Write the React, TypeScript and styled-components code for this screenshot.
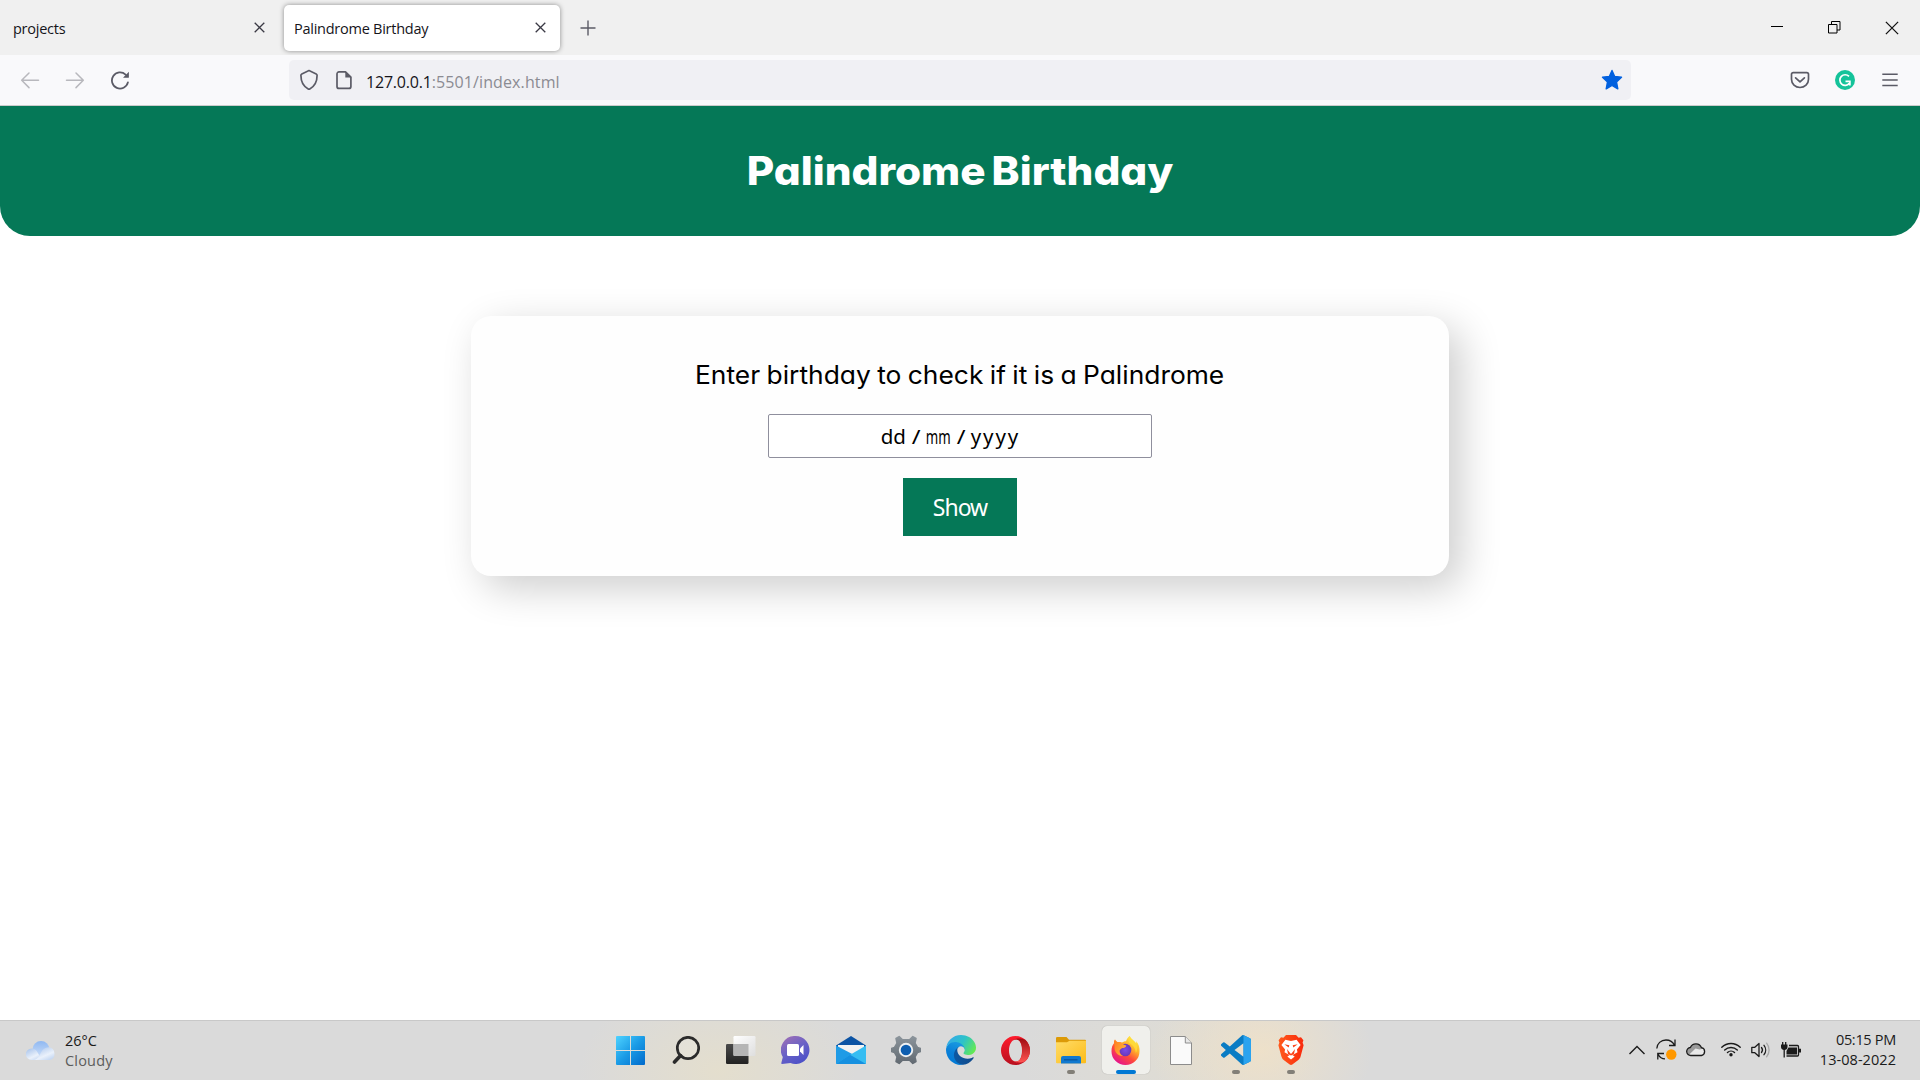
import React from 'react';
import styled, { createGlobalStyle, css } from 'styled-components';

const GREEN = '#057857';

const GlobalStyle = createGlobalStyle`
  * { box-sizing: border-box; }
  body { margin: 0; background: #fff; overflow: hidden; }
  svg { display: block; flex: none; }
`;

const Screen = styled.div`
  width: 1920px;
  height: 1080px;
  display: flex;
  flex-direction: column;
  background: #fff;
  font-family: 'Open Sans', 'Noto Sans', sans-serif;
  color: #15141a;
`;

/* ---------- browser chrome ---------- */

const TabStrip = styled.div`
  height: 55px;
  flex: none;
  display: flex;
  align-items: center;
  background: #f0f0f0;
`;

const Tab = styled.div<{ $active?: boolean }>`
  width: 276px;
  height: 46px;
  padding: 0 14px 0 10px;
  display: flex;
  align-items: center;
  justify-content: space-between;
  border-radius: 5px;
  ${(p) =>
    p.$active
      ? css`
          background: #fff;
          box-shadow: 0 0 5px rgba(0, 0, 0, 0.42);
        `
      : css`
          width: 281px;
          padding: 0 16px 0 13px;
          margin-right: 3px;
        `}
`;

const TabTitle = styled.span`
  font-size: 14.5px;
  line-height: 20px;
  letter-spacing: -0.25px;
  white-space: nowrap;
  padding-top: 3px;
`;

const NewTab = styled.div`
  margin-left: 20px;
  display: flex;
`;

const WindowControls = styled.div`
  margin-left: auto;
  padding-right: 21px;
  display: flex;
  align-items: center;
  gap: 44px;
`;

const Toolbar = styled.div`
  height: 51px;
  flex: none;
  display: flex;
  align-items: center;
  background: #f9f9fb;
  border-bottom: 1px solid #ccc;
`;

const NavButtons = styled.div`
  width: 289px;
  padding-left: 20px;
  display: flex;
  align-items: center;
  gap: 25px;
`;

const UrlBar = styled.div`
  width: 1342px;
  height: 40px;
  padding: 0 8px 0 10px;
  display: flex;
  align-items: center;
  border-radius: 5px;
  background: #f0f0f4;
`;

const UrlIcons = styled.div`
  display: flex;
  align-items: center;
  gap: 16px;
  margin-right: 13px;
`;

const Url = styled.span`
  flex: 1;
  font-size: 16px;
  line-height: 22px;
  padding-top: 3px;
  color: #8b8b92;
  letter-spacing: 0.11px;
`;

const Host = styled.span`
  color: #15141a;
  letter-spacing: -0.2px;
`;

const Extensions = styled.div`
  margin-left: auto;
  padding-right: 20px;
  display: flex;
  align-items: center;
  gap: 25px;
`;

/* ---------- page ---------- */

const Page = styled.main`
  flex: 1;
  display: flex;
  flex-direction: column;
  align-items: center;
  background: #fff;
  font-family: Inter, 'Open Sans', sans-serif;
  font-feature-settings: 'cv11';
`;

const Banner = styled.header`
  width: 100%;
  height: 130px;
  display: flex;
  align-items: center;
  justify-content: center;
  border-radius: 0 0 30px 30px;
  background: ${GREEN};
`;

const Title = styled.h1`
  margin: 0;
  font-size: 39px;
  line-height: 60px;
  font-weight: 800;
  word-spacing: -3px;
  color: #fff;
  white-space: nowrap;
  transform: scaleX(1.083);
`;

const Card = styled.section`
  width: 978px;
  height: 260px;
  margin-top: 80px;
  padding-top: 40px;
  display: flex;
  flex-direction: column;
  align-items: center;
  border-radius: 20px;
  background: #fefefe;
  box-shadow: 12px 12px 40px rgba(0, 0, 0, 0.2);
`;

const Prompt = styled.label`
  font-size: 25px;
  line-height: 38px;
  word-spacing: -1px;
  color: #000;
  white-space: nowrap;
  transform: scaleX(1.056);
`;

const DateField = styled.div`
  width: 384px;
  height: 44px;
  margin-top: 20px;
  padding-right: 19px;
  display: flex;
  align-items: center;
  justify-content: center;
  gap: 4px;
  border: 1px solid #8f8f9d;
  border-radius: 2px;
  background: #fff;
  font-family: 'Noto Sans', 'Open Sans', sans-serif;
  font-size: 20.5px;
  color: #000;
`;

const Segment = styled.span<{ $width: number; $stretch?: number; $spacing?: number }>`
  width: ${(p) => p.$width}px;
  display: flex;
  justify-content: center;
  transform: scaleX(${(p) => p.$stretch ?? 1});
  letter-spacing: ${(p) => p.$spacing ?? 0}px;
`;

const ShowButton = styled.button`
  width: 114px;
  height: 58px;
  margin-top: 20px;
  padding: 0;
  border: 0;
  background: ${GREEN};
  color: #fff;
  font-family: 'Noto Sans', 'Open Sans', sans-serif;
  font-size: 23px;
  letter-spacing: -1px;
`;

/* ---------- taskbar ---------- */

const Taskbar = styled.footer`
  height: 60px;
  flex: none;
  display: grid;
  grid-template-columns: 603px 715px 1fr;
  border-top: 1px solid #c8c8c8;
  background:
    radial-gradient(ellipse 140px 90px at 718px 50px, rgba(232, 224, 200, 0.7), rgba(232, 224, 200, 0)),
    radial-gradient(ellipse 110px 90px at 1262px 30px, rgba(242, 226, 198, 0.8), rgba(242, 226, 198, 0)),
    radial-gradient(ellipse 150px 90px at 1170px 40px, rgba(226, 222, 208, 0.6), rgba(226, 222, 208, 0)),
    #dadada;
`;

const Weather = styled.div`
  display: flex;
  align-items: center;
  gap: 9px;
  padding-left: 26px;
`;

const TwoLines = styled.div<{ $right?: boolean }>`
  display: flex;
  flex-direction: column;
  align-items: ${(p) => (p.$right ? 'flex-end' : 'flex-start')};
  font-size: 14.5px;
  line-height: 20px;
`;

const Line = styled.span<{ $muted?: boolean; $spacing?: number }>`
  color: ${(p) => (p.$muted ? '#5c5c5c' : '#1b1b1b')};
  letter-spacing: ${(p) => p.$spacing ?? 0}px;
  white-space: nowrap;
`;

const Apps = styled.div`
  display: flex;
`;

const AppCell = styled.div`
  width: 55px;
  height: 58px;
  display: flex;
  align-items: center;
  justify-content: center;
`;

const AppTile = styled.div<{ $active?: boolean }>`
  position: relative;
  width: 48px;
  height: 48px;
  display: flex;
  align-items: center;
  justify-content: center;
  border-radius: 5px;
  ${(p) => p.$active && 'background: #f0f0ec; box-shadow: 0 0 1px rgba(0,0,0,.3);'}
`;

const Indicator = styled.i<{ $active?: boolean }>`
  position: absolute;
  bottom: 0;
  left: 50%;
  transform: translateX(-50%);
  width: ${(p) => (p.$active ? 20 : 8)}px;
  height: 4px;
  border-radius: 2px;
  background: ${(p) => (p.$active ? '#0078d4' : '#827f78')};
`;

const Tray = styled.div`
  display: flex;
  align-items: center;
  justify-content: flex-end;
  padding: 0 24px 2px 0;
`;

const TrayIcons = styled.div`
  display: flex;
  align-items: center;
  margin-right: 19px;
`;

const TrayIcon = styled.span<{ $after: number }>`
  margin-right: ${(p) => p.$after}px;
`;

/* ---------- icons ---------- */

const CloseX = ({ size = 11, color = '#3a3944', w = 1.3 }) => (
  <svg width={size} height={size} viewBox="0 0 11 11" stroke={color} strokeWidth={w}>
    <path d="M.7.7l9.6 9.6M10.3.7L.7 10.3" />
  </svg>
);

const Arrow = ({ flip = false }) => (
  <svg width="20" height="20" viewBox="0 0 20 20" fill="none" stroke="#b8b8bd" strokeWidth="1.5" strokeLinecap="round" strokeLinejoin="round" transform={flip ? 'scale(-1 1)' : undefined}>
    <path d="M18.5 10.3H2M9 3L1.7 10.3 9 17.6" />
  </svg>
);

const Reload = () => (
  <svg width="20" height="20" viewBox="0 0 20 20" fill="none" stroke="#5b5b66" strokeWidth="1.8" strokeLinecap="round">
    <path d="M17.900 12.400A8.100 8.100 0 1 1 15.600 4.600" />
    <path d="M18.900 1.700v5.600a.5.5 0 0 1-.5.5h-5.400z" fill="#5b5b66" stroke="none" />
  </svg>
);

const Shield = () => (
  <svg width="20" height="22" viewBox="0 0 20 22" fill="none" stroke="#5b5b66" strokeWidth="1.7" strokeLinejoin="round">
    <path d="M10 1.600l7.200 3.300c.6.3.9.8.9 1.400 0 5.700-1.800 10.700-7.300 13.700a1.700 1.700 0 0 1-1.600 0C3.700 17 1.900 12 1.900 6.300c0-.6.3-1.100.9-1.400z" />
  </svg>
);

const Doc = () => (
  <svg width="18" height="20" viewBox="0 0 18 20" fill="none" stroke="#5b5b66" strokeWidth="1.7" strokeLinejoin="round">
    <path d="M4 1.900h6.500l5.400 5.300v9.200a2 2 0 0 1-2 2H4a2 2 0 0 1-2-2V3.900a2 2 0 0 1 2-2z" />
    <path d="M10.300 1.500v6h6z" fill="#5b5b66" stroke="none" />
  </svg>
);

const Star = () => (
  <svg width="22" height="22" viewBox="0 0 22 22">
    <path d="M11 1.500l2.700 6 6.800.8-5 4.700 1.300 6.800L11 16.500l-5.800 3.300 1.300-6.800-5-4.700 6.800-.8z" fill="#0060df" stroke="#0060df" strokeWidth="1.400" strokeLinejoin="round" />
  </svg>
);

const Pocket = () => (
  <svg width="20" height="18" viewBox="0 0 20 18" fill="none" stroke="#5b5b66" strokeWidth="1.700" strokeLinecap="round" strokeLinejoin="round">
    <path d="M3.200 1.600h13.600c1 0 1.700.7 1.700 1.700v5C18.500 13 14.700 16.500 10 16.500S1.500 13 1.500 8.300v-5c0-1 .7-1.700 1.700-1.700z" />
    <path d="M5.600 6.800L10 10.900l4.400-4.100" />
  </svg>
);

const Grammarly = () => (
  <svg width="20" height="20" viewBox="0 0 20 20" fill="none" stroke="#fff" strokeWidth="1.700">
    <circle cx="10" cy="10" r="10" fill="#15c39a" stroke="none" />
    <path d="M14 6.400A5.300 5.300 0 1 0 14.300 13.400M10.500 11.400h4.400v4" />
  </svg>
);

const Menu = () => (
  <svg width="20" height="14" viewBox="0 0 20 14" stroke="#5b5b66" strokeWidth="1.500">
    <path d="M2.300 1.300h15.400M2.300 7h15.400M2.300 12.600h15.400" />
  </svg>
);

const WeatherCloud = () => (
  <svg width="30" height="20" viewBox="0 0 30 20">
    <defs>
      <linearGradient id="wc1" x1="0" y1="0" x2="0" y2="1">
        <stop offset="0" stopColor="#8fb8f2" />
        <stop offset="1" stopColor="#cfe0f8" />
      </linearGradient>
      <linearGradient id="wc2" x1="0" y1="0" x2=".7" y2="1">
        <stop offset="0" stopColor="#a3c0ea" />
        <stop offset=".7" stopColor="#eaf1fb" />
        <stop offset="1" stopColor="#c7d9f3" />
      </linearGradient>
    </defs>
    <circle cx="15" cy="8.500" r="8.500" fill="url(#wc1)" />
    <path d="M5.500 7.500c2.500 0 4 1 5.200 2.600L16 19H5.600A5.700 5.700 0 0 1 5.500 7.500z" fill="url(#wc2)" />
    <path d="M8 19c4-1 5-4 7-7.500 1.600-3.200 4-5.300 7.500-5.300A6.500 6.500 0 0 1 23.500 19z" fill="url(#wc2)" />
  </svg>
);

const Windows = () => (
  <svg width="29" height="29" viewBox="0 0 29 29">
    <defs>
      <linearGradient id="win" x1="0" y1="0" x2="1" y2="1">
        <stop offset="0" stopColor="#4fd3ff" />
        <stop offset=".5" stopColor="#1a9be6" />
        <stop offset="1" stopColor="#0069cb" />
      </linearGradient>
    </defs>
    <path fill="url(#win)" d="M1 0h13v14H0V1a1 1 0 0 1 1-1zM15 0h13a1 1 0 0 1 1 1v13H15zM0 15h14v14H1a1 1 0 0 1-1-1zM15 15h14v13a1 1 0 0 1-1 1H15z" />
  </svg>
);

const Search = () => (
  <svg width="28" height="28" viewBox="0 0 28 28" fill="none" stroke="#2b2b2b">
    <circle cx="16" cy="12" r="10.700" strokeWidth="2.700" fill="rgba(255,255,255,.15)" />
    <path d="M8.600 19.600L2.500 26" strokeWidth="3.600" strokeLinecap="round" />
  </svg>
);

const TaskView = () => (
  <svg width="30" height="28" viewBox="0 0 30 28">
    <defs>
      <linearGradient id="tv1" x1="0" y1="0" x2="0" y2="1">
        <stop offset="0" stopColor="#4a4a4a" />
        <stop offset="1" stopColor="#222" />
      </linearGradient>
      <linearGradient id="tv2" x1="0" y1="0" x2="1" y2="1">
        <stop offset="0" stopColor="#fff" />
        <stop offset="1" stopColor="#dedede" />
      </linearGradient>
    </defs>
    <rect y="8" width="22.500" height="20" rx="1.200" fill="url(#tv1)" />
    <rect x="7.500" width="22" height="20" rx="1.200" fill="url(#tv2)" />
    <path d="M7.500 8h15v12h-14a1 1 0 0 1-1-1z" fill="#b5b5b5" />
  </svg>
);

const Chat = () => (
  <svg width="29" height="28" viewBox="0 0 29 28">
    <defs>
      <linearGradient id="chat" x1=".1" y1="0" x2=".7" y2="1">
        <stop offset="0" stopColor="#a06fb5" />
        <stop offset=".5" stopColor="#6a62c6" />
        <stop offset="1" stopColor="#4b50c8" />
      </linearGradient>
    </defs>
    <path d="M14.500 0a14 14 0 1 1-5 27.100L1 28c-.6 0-.9-.5-.7-1l1.500-6A14 14 0 0 1 14.500 0z" fill="url(#chat)" />
    <rect x="6" y="8" width="12" height="12" rx="1.500" fill="#fff" />
    <path d="M19 12.500L22.500 9v10L19 15.500z" fill="#fff" />
  </svg>
);

const Mail = () => (
  <svg width="30" height="28" viewBox="0 0 30 28">
    <path d="M15 0l15 9.500V15H0V9.500z" fill="#0b53a4" />
    <path d="M2 9h26v9L15 23 2 18z" fill="#f2f2f2" />
    <path d="M0 9.500L20 20 30 28H1a1 1 0 0 1-1-1z" fill="#1f9be6" />
    <path d="M30 9.500L13 19.500 0 28h29a1 1 0 0 0 1-1z" fill="#36bdf2" />
    <path d="M0 28L14 18.800 30 28z" fill="#1690e0" />
  </svg>
);

const Gear = () => (
  <svg width="30" height="30" viewBox="0 0 30 30">
    <defs>
      <linearGradient id="gear" x1="0" y1="0" x2="0" y2="1">
        <stop offset="0" stopColor="#8b949b" />
        <stop offset="1" stopColor="#626a72" />
      </linearGradient>
    </defs>
    <path
      fill="url(#gear)"
      stroke="url(#gear)"
      strokeWidth="1.500"
      strokeLinejoin="round"
      d="M8.200 1.600L11.500 4.800h7L21.800 1.600 25 3.500 24 8.200l2.500 4.200 3 1v3.200l-3 1-2.500 4.200 1 4.700-3.200 1.900-3.300-3.200h-7L8.200 28.400 5 26.500l1-4.700-2.500-4.200-3-1v-3.200l3-1L6 8.200 5 3.500z"
    />
    <circle cx="15" cy="15" r="7.200" fill="#eef1f3" />
    <circle cx="15" cy="15" r="5.300" fill="#0d5eb0" />
  </svg>
);

const Edge = () => (
  <svg width="30" height="30" viewBox="0 0 256 256">
    <defs>
      <linearGradient id="e1" x1="0" y1="0" x2="1" y2="0">
        <stop offset="0" stopColor="#0c59a4" />
        <stop offset="1" stopColor="#114a8b" />
      </linearGradient>
      <linearGradient id="e2" x1=".6" y1="0" x2=".3" y2="1">
        <stop offset="0" stopColor="#1b9de2" />
        <stop offset=".5" stopColor="#0a80d8" />
        <stop offset="1" stopColor="#0078d4" />
      </linearGradient>
      <linearGradient id="e3" x1="0" y1=".3" x2="1" y2=".7">
        <stop offset="0" stopColor="#35a9ea" />
        <stop offset=".5" stopColor="#2dc2c9" />
        <stop offset="1" stopColor="#66eb4e" />
      </linearGradient>
    </defs>
    <path fill="url(#e1)" d="M231 190.500c-3.400 1.800-6.900 3.400-10.500 4.700a101.700 101.700 0 0 1-35.900 6.400c-47.300 0-88.500-32.500-88.500-74.300 0-11.500 6.400-21.900 16.400-27.300-42.800 1.800-53.800 46.400-53.800 72.500 0 74 68.100 81.400 82.800 81.400 7.900 0 19.800-2.300 27-4.600l1.300-.4a128 128 0 0 0 66.600-52.800 4 4 0 0 0-5.400-5.600z" />
    <path fill="url(#e2)" d="M105.700 241.400a79.200 79.200 0 0 1-22.700-21.300 80.700 80.700 0 0 1 29.500-120c3.200-1.500 8.500-4.100 15.600-4a32.400 32.400 0 0 1 25.700 13 31.900 31.900 0 0 1 6.300 18.700c0-.2 24.500-79.600-80-79.600-43.900 0-80 41.700-80 78.200A130 130 0 0 0 12.100 182a128 128 0 0 0 156.400 67 75.500 75.500 0 0 1-62.800-7.600z" />
    <path fill="url(#e3)" d="M152.300 148.900c-.8 1-3.300 2.500-3.300 5.700 0 2.600 1.700 5.100 4.700 7.200 14.400 10 41.500 8.700 41.600 8.700a59.600 59.600 0 0 0 30.300-8.300 61.400 61.400 0 0 0 30.400-52.900c.3-22.400-8-37.300-11.300-43.900C223.500 23.900 177.700 0 128 0A128 128 0 0 0 0 126.200c.5-36.500 36.800-66 80-66 3.500 0 23.500.3 42 10 16.300 8.600 24.900 18.900 30.800 29.200 6.200 10.700 7.300 24.100 7.300 29.500 0 5.300-2.700 13.300-7.800 20z" />
  </svg>
);

const Opera = () => (
  <svg width="29" height="29" viewBox="0 0 29 29">
    <defs>
      <linearGradient id="op1" x1="0" y1="0" x2="0" y2="1">
        <stop offset="0" stopColor="#ff1b2d" />
        <stop offset="1" stopColor="#b8101f" />
      </linearGradient>
      <linearGradient id="op2" x1="0" y1="0" x2="0" y2="1">
        <stop offset="0" stopColor="#a00b12" />
        <stop offset="1" stopColor="#ff5552" />
      </linearGradient>
    </defs>
    <path fillRule="evenodd" fill="url(#op1)" d="M14.500 0a14.500 14.500 0 1 1 0 29 14.500 14.500 0 1 1 0-29zM15 3.500c-4 0-7 4.800-7 11s3 11 7 11 6-4.800 6-11-2-11-6-11z" />
    <path fill="url(#op2)" d="M11 5.300c3-3.400 9-3.600 13.300-1.500a14.500 14.500 0 0 1 0 21.400c-4.300 2.100-10.300 1.900-13.300-1.500 1.200 1.200 2.600 1.800 4 1.800 4 0 6.300-4.900 6.300-11S19 3.500 15 3.500c-1.400 0-2.800.6-4 1.800z" />
  </svg>
);

const Explorer = () => (
  <svg width="30" height="27" viewBox="0 0 30 27">
    <defs>
      <linearGradient id="fe" x1="0" y1="0" x2="1" y2="1">
        <stop offset="0" stopColor="#ffdc68" />
        <stop offset="1" stopColor="#fcbc19" />
      </linearGradient>
    </defs>
    <path d="M1.200 0h9.300l2.500 2.700H29a1 1 0 0 1 1 1V10H0V1.200A1.200 1.200 0 0 1 1.200 0z" fill="#dc9a07" />
    <path d="M0 5.200h11l2.500-1.500H30v21.500a1 1 0 0 1-1 1H1a1 1 0 0 1-1-1z" fill="url(#fe)" />
    <path d="M7 19h16a2 2 0 0 1 2 2v5.500H5V21a2 2 0 0 1 2-2z" fill="#1179cf" />
    <path d="M8 22.800h13.500" stroke="#0b559e" strokeWidth="1.300" />
  </svg>
);

const Firefox = () => (
  <svg width="29" height="29" viewBox="0 0 29 29">
    <defs>
      <linearGradient id="ff1" x1=".85" y1=".05" x2=".25" y2=".95">
        <stop offset="0" stopColor="#fff14a" />
        <stop offset=".35" stopColor="#ffb02a" />
        <stop offset=".65" stopColor="#ff4a3a" />
        <stop offset="1" stopColor="#e5148c" />
      </linearGradient>
      <radialGradient id="ff2">
        <stop offset="0" stopColor="#7a4bea" />
        <stop offset="1" stopColor="#6a38b8" />
      </radialGradient>
      <linearGradient id="ff3" x1="0" y1="0" x2="1" y2=".6">
        <stop offset="0" stopColor="#ff7a1f" />
        <stop offset="1" stopColor="#ffb43a" />
      </linearGradient>
    </defs>
    <path fill="url(#ff1)" d="M18.600 0c1.600 3.300 5 4.800 6.600 7.500.1-1 .1-1.700-.2-2.500C28 8 28.800 12 28.500 15.500A14 13.500 0 0 1 .5 15.500C.4 11.800 1.500 9 3 7.300c0-1.400.2-2.600 1-3.800.5 1.300 1.200 2 2.300 2.600 1.700-.3 3.300-.2 4.700.6 1-1 2.400-1.500 4-1.500C15.500 3.500 16.700 1.500 18.600 0z" />
    <ellipse cx="14.300" cy="14" rx="6" ry="6.300" fill="url(#ff2)" />
    <path fill="url(#ff3)" d="M4 3.500c.5 1.300 1.200 2 2.300 2.600 1.700-.3 3.300-.2 4.700.6.5 1.500 2 2.400 4.300 2.700-.3 2-2 2.500-4.300 2.600-.8 1.300-2.300 1.400-2.500 2.800-.2 2.600 1.500 4.300 3.500 5-4.500.5-8.500-3-8.500-8 0-2 .5-3.300-.5-4.500 0-1.400.2-2.600 1-3.800z" />
    <path fill="#ffdf3a" d="M18.600 0c1.600 3.300 5 4.800 6.600 7.500 1.500 3 1.300 7-.4 9.500-.2-4.500-2.600-7.500-6.300-9.700C16.800 5.500 17 2 18.600 0z" opacity=".75" />
  </svg>
);

const BlankFile = () => (
  <svg width="22" height="29" viewBox="0 0 22 29" fill="#fafafa" stroke="#8c8c8c" strokeWidth="1">
    <path d="M.5.5h14.800l6.200 6.500v21.500H.5z" />
    <path d="M15.300.5V7h6.200" fill="#e8e8e8" />
  </svg>
);

const VSCode = () => (
  <svg width="30" height="30" viewBox="0 0 24 24">
    <path fill="#0a7cc4" d="M23.150 2.587L18.210.21a1.494 1.494 0 0 0-1.705.29l-9.460 8.630-4.120-3.128a.999.999 0 0 0-1.276.057L.327 7.261A1 1 0 0 0 .326 8.740L3.899 12 .326 15.260a1 1 0 0 0 .001 1.479L1.650 17.940a.999.999 0 0 0 1.276.057l4.120-3.128 9.460 8.630a1.492 1.492 0 0 0 1.704.29l4.942-2.377A1.500 1.500 0 0 0 24 20.060V3.939a1.500 1.500 0 0 0-.85-1.352zm-5.146 14.861L10.826 12l7.178-5.448v10.896z" />
    <path fill="#2aa3ef" d="M18 .2l5.150 2.387c.5.250.85.750.85 1.352V20.060c0 .6-.35 1.100-.85 1.350L18 23.800z" />
  </svg>
);

const Brave = () => (
  <svg width="26" height="30" viewBox="0 0 26 30">
    <defs>
      <linearGradient id="brave" x1="0" y1="0" x2="1" y2="0">
        <stop offset="0" stopColor="#ff5a1c" />
        <stop offset="1" stopColor="#f92a0c" />
      </linearGradient>
    </defs>
    <path d="M8 0h10l2.600 2.700 2.400-.4 2.400 3-.8 2.200 1 2.800-3 11.200c-.4 1.600-1.400 2.800-2.600 3.700L14.300 29.500a2.400 2.400 0 0 1-2.600 0L6 25.200a6.500 6.500 0 0 1-2.600-3.700L.4 10.300l1-2.800-.8-2.200 2.400-3 2.400.4z" fill="url(#brave)" />
    <path d="M7.400 4.800L13 5.900l5.600-1.100 4 5.200-3.700 4.600.6 2.600-4 2.400-2.500.4-2.500-.4-4-2.400.6-2.600L3.400 10z" fill="#fff" />
    <path d="M9.300 21.500L13 19.300l3.700 2.200L13 24.600z" fill="#fff" />
    <path d="M6.300 9.300l5 .9-.6 2.200zM19.700 9.300l-5 .9.600 2.200z" fill="#fb431a" />
    <path d="M9 14l2.700 3.600L13 19l1.300-1.400L17 14l-1 5-3 1.500-3-1.500z" fill="#fb431a" />
  </svg>
);

const Chevron = () => (
  <svg width="16" height="10" viewBox="0 0 16 10" fill="none" stroke="#1b1b1b" strokeWidth="1.400">
    <path d="M.5 9L8 1.500 15.500 9" />
  </svg>
);

const Sync = () => (
  <svg width="21" height="21" viewBox="0 0 21 21" fill="none" stroke="#1b1b1b" strokeWidth="1.300">
    <path d="M.8 9.500C1 4.500 5 1 10 1c3.800 0 7 2 8.500 5.200M19 .5v6h-6" />
    <path d="M9 19.800c-3 0-5.500-1.800-7-4.600M1.800 20.500v-6H8" />
    <circle cx="15.300" cy="15.500" r="5.200" fill="#ff9800" stroke="none" />
  </svg>
);

const OneDrive = () => (
  <svg width="20" height="15" viewBox="0 0 20 15" strokeLinejoin="round">
    <path d="M5 13.500a4 4 0 0 1-.6-8A6 6 0 0 1 15.500 5.700a4 4 0 0 1 0 7.800z" fill="#e9e9e9" />
    <path d="M4.400 5.500A6 6 0 0 1 15.500 5.700L17 6.800 13.500 7.500 9.500 6.500 3 12.700C0 11 .2 6.200 4.400 5.500z" fill="#9a9a9a" />
    <path d="M5 13.500a4 4 0 0 1-.6-8A6 6 0 0 1 15.500 5.700a4 4 0 0 1 0 7.800z" fill="none" stroke="#1b1b1b" strokeWidth="1.300" />
  </svg>
);

const Wifi = () => (
  <svg width="20" height="15" viewBox="0 0 20 15" fill="none" stroke="#1b1b1b" strokeWidth="1.400" strokeLinecap="round">
    <path d="M.8 5.300a13 13 0 0 1 18.400 0M3.700 8a9 9 0 0 1 12.600 0M6.500 10.600a5 5 0 0 1 7 0" />
    <circle cx="10" cy="12.800" r="1.700" fill="#1b1b1b" stroke="none" />
  </svg>
);

const Volume = () => (
  <svg width="20" height="16" viewBox="0 0 20 16" fill="none" stroke="#1b1b1b" strokeWidth="1.300" strokeLinecap="round" strokeLinejoin="round">
    <path d="M.8 5.300h3L8 1.500v13l-4.200-3.800h-3z" />
    <path d="M10.500 5.500a4 4 0 0 1 0 5M13 3.300a7.500 7.500 0 0 1 0 9.400" />
    <path d="M15.600 1.200a10.500 10.500 0 0 1 0 13.600" stroke="#a8a8a8" />
  </svg>
);

const Battery = () => (
  <svg width="20" height="16" viewBox="0 0 20 16" fill="none" stroke="#1b1b1b" strokeWidth="1.300">
    <path d="M8 3.500h8.500a1 1 0 0 1 1 1v8.500a1 1 0 0 1-1 1H5.500" />
    <path d="M7.500 5.500h8.500v7H5.500V9z" fill="#1b1b1b" stroke="none" />
    <path d="M18 6.800h2v3.800h-2z" fill="#1b1b1b" stroke="none" />
    <path d="M0 2.500h6.500V5c0 1.800-1.400 3-3.200 3S0 6.800 0 5z" fill="#1b1b1b" stroke="none" />
    <path d="M1.700 0v3M4.700 0v3M3.200 7v8.500" />
  </svg>
);

const apps: { name: string; icon: React.ReactNode; running?: boolean; active?: boolean }[] = [
  { name: 'start', icon: <Windows /> },
  { name: 'search', icon: <Search /> },
  { name: 'taskview', icon: <TaskView /> },
  { name: 'chat', icon: <Chat /> },
  { name: 'mail', icon: <Mail /> },
  { name: 'settings', icon: <Gear /> },
  { name: 'edge', icon: <Edge /> },
  { name: 'opera', icon: <Opera /> },
  { name: 'explorer', icon: <Explorer />, running: true },
  { name: 'firefox', icon: <Firefox />, running: true, active: true },
  { name: 'file', icon: <BlankFile /> },
  { name: 'vscode', icon: <VSCode />, running: true },
  { name: 'brave', icon: <Brave />, running: true },
];

export default function App() {
  return (
    <Screen>
      <GlobalStyle />
      <TabStrip>
        <Tab>
          <TabTitle>projects</TabTitle>
          <CloseX />
        </Tab>
        <Tab $active>
          <TabTitle>Palindrome Birthday</TabTitle>
          <CloseX />
        </Tab>
        <NewTab>
          <svg width="16" height="16" viewBox="0 0 16 16" stroke="#5b5b66" strokeWidth="1.400">
            <path d="M8 .5v15M.5 8h15" />
          </svg>
        </NewTab>
        <WindowControls>
          <svg width="13" height="13" viewBox="0 0 13 13">
            <path d="M0 5h12v1H0z" />
          </svg>
          <svg width="13" height="13" viewBox="0 0 13 13" fill="none" stroke="#000">
            <path d="M.5 3.500h8.500v8.500H.5zM3.500 3.500v-3h8.500v8.500H9" />
          </svg>
          <CloseX size={14} color="#111" w={1} />
        </WindowControls>
      </TabStrip>
      <Toolbar>
        <NavButtons>
          <Arrow />
          <Arrow flip />
          <Reload />
        </NavButtons>
        <UrlBar>
          <UrlIcons>
            <Shield />
            <Doc />
          </UrlIcons>
          <Url>
            <Host>127.0.0.1</Host>:5501/index.html
          </Url>
          <Star />
        </UrlBar>
        <Extensions>
          <Pocket />
          <Grammarly />
          <Menu />
        </Extensions>
      </Toolbar>
      <Page>
        <Banner>
          <Title>Palindrome Birthday</Title>
        </Banner>
        <Card>
          <Prompt>Enter birthday to check if it is a Palindrome</Prompt>
          <DateField>
            <Segment $width={24.6}>dd</Segment>
            <Segment $width={12.3} $stretch={1.15}>/</Segment>
            <Segment $width={24.6} $stretch={0.65}>mm</Segment>
            <Segment $width={12.3} $stretch={1.15}>/</Segment>
            <Segment $width={49.2} $spacing={1.9}>yyyy</Segment>
          </DateField>
          <ShowButton>Show</ShowButton>
        </Card>
      </Page>
      <Taskbar>
        <Weather>
          <WeatherCloud />
          <TwoLines>
            <Line>26°C</Line>
            <Line $muted $spacing={0.2}>Cloudy</Line>
          </TwoLines>
        </Weather>
        <Apps>
          {apps.map((a) => (
            <AppCell key={a.name}>
              <AppTile $active={a.active}>
                {a.icon}
                {a.running && <Indicator $active={a.active} />}
              </AppTile>
            </AppCell>
          ))}
        </Apps>
        <Tray>
          <TrayIcons>
            <TrayIcon $after={11}><Chevron /></TrayIcon>
            <TrayIcon $after={9}><Sync /></TrayIcon>
            <TrayIcon $after={15}><OneDrive /></TrayIcon>
            <TrayIcon $after={10}><Wifi /></TrayIcon>
            <TrayIcon $after={10}><Volume /></TrayIcon>
            <TrayIcon $after={0}><Battery /></TrayIcon>
          </TrayIcons>
          <TwoLines $right>
            <Line $spacing={-0.3}>05:15 PM</Line>
            <Line $spacing={0.05}>13-08-2022</Line>
          </TwoLines>
        </Tray>
      </Taskbar>
    </Screen>
  );
}
